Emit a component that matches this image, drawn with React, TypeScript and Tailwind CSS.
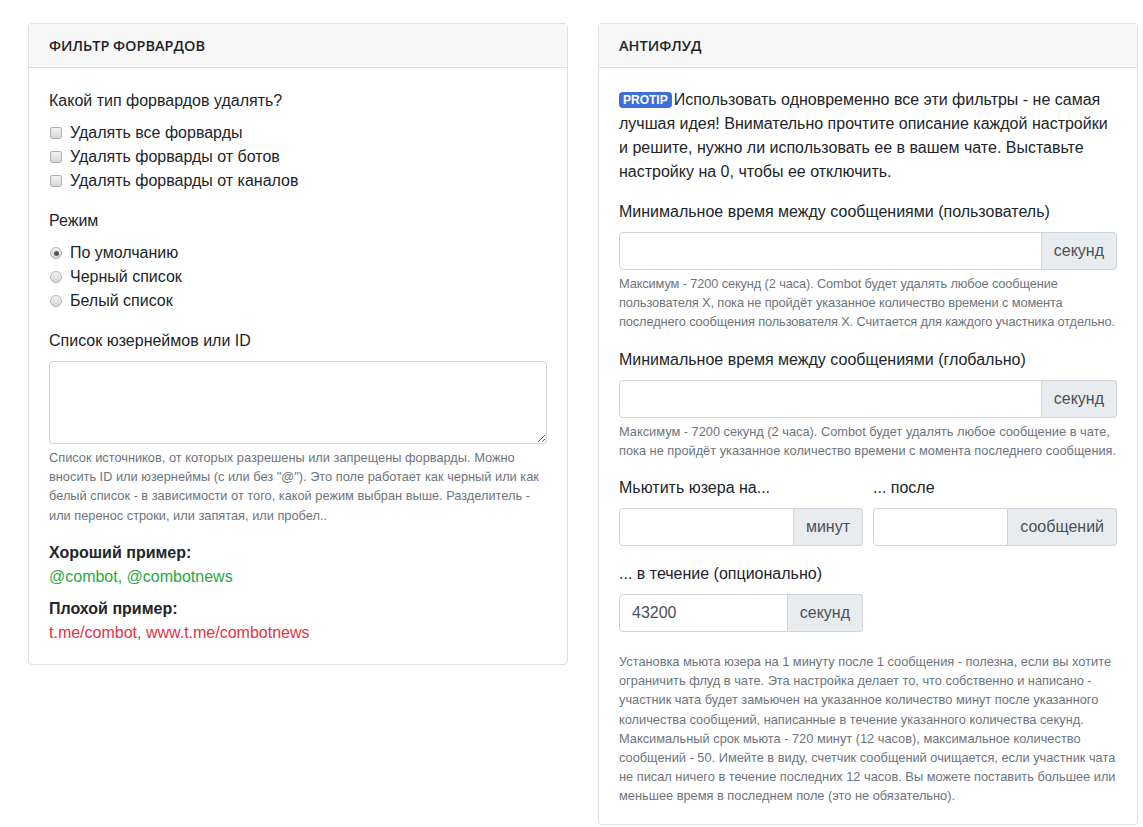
import type React from 'react'

const font = { fontFamily: '"Liberation Sans", Arial, sans-serif' }
const headFont = { fontFamily: '"Open Sans", "Noto Sans", sans-serif' }

const Checkbox: React.FC<{ label: string }> = ({ label }) => (
  <label className="flex h-6 items-center">
    <input
      type="checkbox"
      className="mr-[8px] ml-[1px] h-[12px] w-[12px] appearance-none rounded-[2px] border border-[#b0b0b0] bg-gradient-to-b from-[#f2f2f2] to-[#d8d8d8]"
    />
    <span>{label}</span>
  </label>
)

const Radio: React.FC<{ label: string; checked?: boolean }> = ({ label, checked }) => (
  <label className="flex h-6 items-center">
    <span className="mr-[8px] ml-[1px] flex h-[12px] w-[12px] items-center justify-center rounded-full border border-[#b0b0b0] bg-gradient-to-b from-[#f2f2f2] to-[#d8d8d8]">
      {checked && <span className="h-[5px] w-[5px] rounded-full bg-[#555]" />}
    </span>
    <span>{label}</span>
  </label>
)

const InputGroup: React.FC<{ unit: string; value?: string; className?: string }> = ({ unit, value, className }) => (
  <div className={`flex h-[38px] ${className ?? ''}`}>
    <input
      defaultValue={value}
      className="min-w-0 flex-1 rounded-l-[4px] border border-[#ced4da] px-3 text-[16px] text-[#495057] outline-none"
    />
    <span className="flex items-center rounded-r-[4px] border border-l-0 border-[#ced4da] bg-[#e9ecef] px-3 text-[16px] text-[#495057]">
      {unit}
    </span>
  </div>
)

const Card: React.FC<{ title: string; children: React.ReactNode }> = ({ title, children }) => (
  <div className="w-[540px] self-start rounded-[4px] border border-[#dfdfdf]">
    <div
      className="flex h-[44px] items-center border-b border-[#dfdfdf] bg-[#f7f7f7] px-5 text-[14.5px] font-semibold uppercase"
      style={headFont}
    >
      {title}
    </div>
    <div className="px-5 pt-5 pb-5">{children}</div>
  </div>
)

export default function App() {
  return (
    <div className="flex gap-[30px] bg-white pt-[23px] pl-[28px] text-[16px] leading-6 text-[#212529]" style={font}>
      <Card title="Фильтр форвардов">
        <div className="mt-px mb-2">Какой тип форвардов удалять?</div>
        <div className="mb-4">
          <Checkbox label="Удалять все форварды" />
          <Checkbox label="Удалять форварды от ботов" />
          <Checkbox label="Удалять форварды от каналов" />
        </div>
        <div className="mb-2">Режим</div>
        <div className="mb-4">
          <Radio label="По умолчанию" checked />
          <Radio label="Черный список" />
          <Radio label="Белый список" />
        </div>
        <div className="mb-2">Список юзернеймов или ID</div>
        <textarea className="block h-[83px] w-full rounded-[4px] border border-[#ced4da] px-3 py-1.5 outline-none" />
        <p className="mt-1 mb-4 text-[12.8px] leading-[19.2px] text-[#6c757d]">
          Список источников, от которых разрешены или запрещены форварды. Можно вносить ID или юзернеймы (с или без
          "@"). Это поле работает как черный или как белый список - в зависимости от того, какой режим выбран выше.
          Разделитель - или перенос строки, или запятая, или пробел..
        </p>
        <div className="font-bold">Хороший пример:</div>
        <div className="mb-2 text-[#28a745]">@combot, @combotnews</div>
        <div className="font-bold">Плохой пример:</div>
        <div className="mb-[-1px] text-[#dc3545]">t.me/combot, www.t.me/combotnews</div>
      </Card>

      <Card title="Антифлуд">
        <p className="mb-4">
          <span className="relative -top-[1px] mr-[2px] inline-block rounded-[4px] bg-[#3e6fd8] px-[4px] py-[2px] align-middle text-[12px] leading-none font-bold text-white">
            PROTIP
          </span>
          Использовать одновременно все эти фильтры - не самая лучшая идея! Внимательно прочтите описание каждой
          настройки и решите, нужно ли использовать ее в вашем чате. Выставьте настройку на 0, чтобы ее отключить.
        </p>

        <div className="mb-2">Минимальное время между сообщениями (пользователь)</div>
        <InputGroup unit="секунд" />
        <p className="mt-1 mb-4 text-[12.8px] leading-[19.2px] tracking-[-0.12px] text-[#6c757d]">
          Максимум - 7200 секунд (2 часа). Combot будет удалять любое сообщение пользователя X, пока не пройдёт
          указанное количество времени с момента последнего сообщения пользователя X. Считается для каждого участника
          отдельно.
        </p>

        <div className="mb-2">Минимальное время между сообщениями (глобально)</div>
        <InputGroup unit="секунд" />
        <p className="mt-1 mb-4 text-[12.8px] leading-[19.2px] text-[#6c757d]">
          Максимум - 7200 секунд (2 часа). Combot будет удалять любое сообщение в чате, пока не пройдёт указанное
          количество времени с момента последнего сообщения.
        </p>

        <div className="mb-4 grid grid-cols-2 gap-[10px]">
          <div>
            <div className="mb-2">Мьютить юзера на...</div>
            <InputGroup unit="минут" />
          </div>
          <div>
            <div className="mb-2">... после</div>
            <InputGroup unit="сообщений" />
          </div>
        </div>

        <div className="mb-2">... в течение (опционально)</div>
        <InputGroup unit="секунд" value="43200" className="w-[244px]" />
        <p className="mt-[20px] mb-[-2px] text-[12.8px] leading-[19.2px] text-[#6c757d]">
          Установка мьюта юзера на 1 минуту после 1 сообщения - полезна, если вы хотите ограничить флуд в чате. Эта
          настройка делает то, что собственно и написано - участник чата будет замьючен на указанное количество минут
          после указанного количества сообщений, написанные в течение указанного количества секунд. Максимальный срок
          мьюта - 720 минут (12 часов), максимальное количество сообщений - 50. Имейте в виду, счетчик сообщений
          очищается, если участник чата не писал ничего в течение последних 12 часов. Вы можете поставить большее или
          меньшее время в последнем поле (это не обязательно).
        </p>
      </Card>
    </div>
  )
}
